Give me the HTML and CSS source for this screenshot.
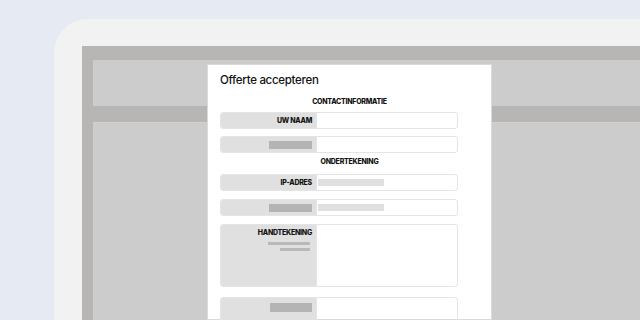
FILE: index.html
```html
<!DOCTYPE html>
<html lang="nl">
<head>
  <meta charset="UTF-8">
  <meta name="viewport" content="width=device-width, initial-scale=1.0">
  <title>Offerte accepteren</title>
  <link rel="stylesheet" href="styles.css">
</head>
<body>
  <div class="device">
    <div class="screen">
      <div class="panel panel-top"></div>
      <div class="panel panel-main"></div>

      <div class="modal">
        <h1 class="modal-title">Offerte accepteren</h1>

        <h2 class="section">CONTACTINFORMATIE</h2>
        <div class="row row-first">
          <div class="label">UW NAAM</div>
          <div class="value"></div>
        </div>
        <div class="row row-break">
          <div class="label"><span class="bar bar-label"></span></div>
          <div class="value"></div>
        </div>

        <h2 class="section section-second">ONDERTEKENING</h2>
        <div class="row">
          <div class="label">IP-ADRES</div>
          <div class="value"><span class="bar bar-value"></span></div>
        </div>
        <div class="row">
          <div class="label"><span class="bar bar-label"></span></div>
          <div class="value"><span class="bar bar-value"></span></div>
        </div>
        <div class="row row-tall">
          <div class="label label-top">
            HANDTEKENING
            <span class="bar bar-line"></span>
            <span class="bar bar-line bar-short"></span>
          </div>
          <div class="value"></div>
        </div>
        <div class="row row-last">
          <div class="label label-top"><span class="bar bar-label bar-wide"></span></div>
          <div class="value"></div>
        </div>
      </div>
    </div>
  </div>
</body>
</html>
```

FILE: styles.css
```css
html, body {
  margin: 0;
  height: 100%;
  overflow: hidden;
}

body {
  background-color: #e6eaf3;
  font-family: Inter, "Liberation Sans", sans-serif;
  color: #111;
  padding: 19px 0 0 54px;
  box-sizing: border-box;
}

.device {
  height: 100%;
  background-color: #f2f2f2;
  border-top-left-radius: 34px;
  padding: 27px 0 0 28px;
  box-sizing: border-box;
}

.screen {
  position: relative;
  height: 100%;
  background-color: #b7b6b4;
  padding: 14px 0 0 11px;
  box-sizing: border-box;
  display: flex;
  flex-direction: column;
  gap: 16px;
}

.panel {
  background-color: #cccccc;
}

.panel-top {
  height: 46px;
}

.panel-main {
  flex: 1;
  border-top: 1px solid #d2d2d2;
}

.modal {
  position: absolute;
  left: 125px;
  top: 18px;
  width: 285px;
  height: 256px;
  box-sizing: border-box;
  background-color: #fff;
  border: 1px solid #dadada;
  padding: 7px 12px 0;
  display: flex;
  flex-direction: column;
  align-items: flex-start;
}

.modal-title {
  margin: 0;
  font-size: 11.5px;
  line-height: 16px;
  font-weight: 500;
  letter-spacing: -0.3px;
}

.section {
  align-self: stretch;
  margin: 9px 0 5px;
  font-size: 7px;
  line-height: 10px;
  font-weight: 800;
  text-align: center;
  letter-spacing: -0.25px;
}

.section-second {
  margin: 0 0 7px;
}

.row {
  display: flex;
  flex-shrink: 0;
  width: 238px;
  height: 17px;
  box-sizing: border-box;
  border: 1px solid #e4e4e4;
  border-radius: 3px;
  overflow: hidden;
  margin-bottom: 8px;
}

.row-first {
  margin-bottom: 7px;
}

.row-break {
  margin-bottom: 4px;
}

.row-tall {
  height: 63px;
  margin-bottom: 10px;
}

.row-last {
  height: 30px;
}

.label {
  width: 95px;
  flex-shrink: 0;
  background-color: #e0e0e0;
  display: flex;
  align-items: center;
  justify-content: flex-end;
  padding-right: 4px;
  box-sizing: border-box;
  font-size: 7px;
  font-weight: 800;
  letter-spacing: -0.25px;
}

.label-top {
  flex-direction: column;
  align-items: flex-end;
  justify-content: flex-start;
  padding-top: 4px;
  line-height: 8px;
}

.value {
  flex: 1;
  display: flex;
  align-items: center;
  padding-left: 1px;
  border-left: 1px solid #e4e4e4;
}

.bar {
  display: block;
}

.bar-label {
  width: 43px;
  height: 8px;
  background-color: #b4b4b4;
}

.bar-wide {
  width: 42px;
  height: 9px;
  margin-top: 1px;
}

.bar-value {
  width: 66px;
  height: 7px;
  background-color: #e0e0e0;
}

.bar-line {
  width: 42px;
  height: 3px;
  background-color: #b9b9b9;
  margin: 5px 2px 0 0;
}

.bar-short {
  width: 30px;
  margin-top: 3px;
}
```
